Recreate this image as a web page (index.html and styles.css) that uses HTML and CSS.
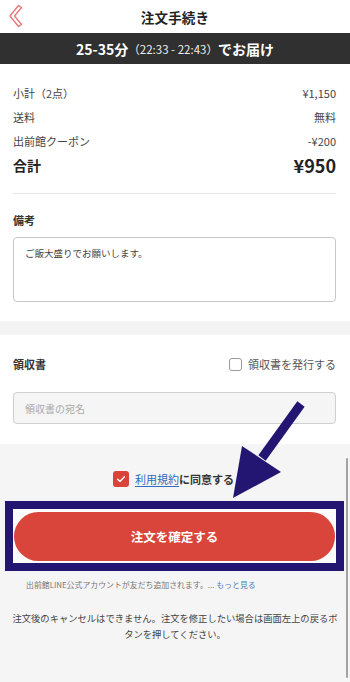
FILE: index.html
```html
<!DOCTYPE html>
<html lang="ja">
<head>
<meta charset="utf-8">
<link rel="stylesheet" href="styles.css">
</head>
<body>
<div class="page">
  <header class="header">
    <svg class="back" width="24" height="32" viewBox="0 0 24 32">
      <polygon points="16.5,5.5 8,16 16.5,26.5 19.5,24.5 12.5,16 19.5,7.5" fill="none" stroke="#e27575" stroke-width="1.3" stroke-linejoin="round"/>
    </svg>
    <h1 class="title">注文手続き</h1>
  </header>
  <div class="delivery"><b>25-35分</b><span class="range">（22:33 - 22:43）</span><b>でお届け</b></div>

  <section class="summary">
    <div class="row"><span>小計（2点）</span><span>¥1,150</span></div>
    <div class="row"><span>送料</span><span>無料</span></div>
    <div class="row"><span>出前館クーポン</span><span>-¥200</span></div>
    <div class="row total"><span>合計</span><span class="total-val">¥950</span></div>
  </section>

  <section class="notes">
    <h2 class="label">備考</h2>
    <div class="textarea">ご飯大盛りでお願いします。</div>
  </section>

  <div class="band"></div>

  <section class="receipt">
    <div class="receipt-head">
      <h2 class="label">領収書</h2>
      <label class="issue"><span class="box"></span>領収書を発行する</label>
    </div>
    <div class="input">領収書の宛名</div>
  </section>

  <section class="bottom">
    <div class="agree">
      <span class="check"><svg width="16" height="16" viewBox="0 0 16 16"><path d="M4.6 8.2 L7 10.4 L11.4 5.8" fill="none" stroke="#fff" stroke-width="1.4" stroke-linecap="round" stroke-linejoin="round"/></svg></span>
      <a class="link">利用規約</a><b>に同意する</b>
    </div>
    <div class="highlight">
      <button class="confirm">注文を確定する</button>
    </div>
    <p class="line-note">出前館LINE公式アカウントが友だち追加されます。... <span class="more">もっと見る</span></p>
    <p class="cancel">注文後のキャンセルはできません。注文を修正したい場合は画面左上の戻るボタンを押してください。</p>
  </section>

  <svg class="arrow" width="350" height="682" viewBox="0 0 350 682">
    <line x1="301" y1="404" x2="262" y2="458" stroke="#231673" stroke-width="9"/>
    <polygon points="242,446 281,472 233,498" fill="#231673"/>
  </svg>
  <div class="scrollbar"></div>
</div>
</body>
</html>
```

FILE: styles.css
```css
* { box-sizing: border-box; margin: 0; padding: 0; }
html, body { width: 350px; height: 682px; overflow: hidden; }
body {
  font-family: "Noto Sans CJK JP", "Noto Sans", sans-serif;
  color: #333;
  background: #f5f5f5;
}
.page { position: relative; width: 350px; height: 682px; background: #f5f5f5; }

.header {
  height: 33px;
  background: #fff;
  display: flex;
  align-items: center;
  justify-content: center;
  position: relative;
}
.back { position: absolute; left: 2px; top: 0; }
.title { font-size: 13.5px; font-weight: 700; color: #222; letter-spacing: 0.2px; }

.delivery {
  height: 31px;
  background: #303030;
  color: #fff;
  display: flex;
  align-items: center;
  justify-content: center;
  font-size: 14px;
}
.delivery b { font-weight: 700; }
.range { font-size: 11.5px; font-weight: 400; color: #eee; }

.summary {
  background: #fff;
  padding: 17px 14px 0 13px;
}
.row {
  display: flex;
  justify-content: space-between;
  align-items: center;
  height: 24px;
  font-size: 11px;
  color: #444;
}
.row.total { font-size: 14px; font-weight: 700; color: #222; border-bottom: 1px solid #e6e6e6; height: 41px; padding-bottom: 17px; }
.total-val { font-size: 18px; }

.notes { background: #fff; padding: 18px 14px 19px 13px; }
.label { font-size: 11px; font-weight: 700; color: #333; line-height: 16px; }
.textarea {
  margin-top: 9px;
  height: 65px;
  border: 1px solid #c8c8c8;
  border-radius: 4px;
  padding: 9px 11px;
  font-size: 9.5px;
  line-height: 12px;
  color: #444;
  background: #fff;
}

.band { height: 14px; background: #f4f4f4; }

.receipt { background: #fff; padding: 19px 14px 20px 13px; }
.receipt-head { display: flex; justify-content: space-between; align-items: center; height: 20px; }
.issue { display: flex; align-items: center; font-size: 11px; color: #555; }
.box {
  width: 13px; height: 13px;
  border: 1px solid #9a9a9a;
  border-radius: 3px;
  background: #fff;
  margin-right: 6px;
}
.input {
  margin-top: 18px;
  height: 32px;
  border: 1px solid #cfcfcf;
  border-radius: 4px;
  background: #f5f5f5;
  padding: 0 11px;
  display: flex;
  align-items: center;
  font-size: 10px;
  color: #aaa;
}

.bottom { padding-top: 26px; }
.agree {
  display: flex;
  align-items: center;
  justify-content: center;
  height: 18px;
  font-size: 11px;
  padding-right: 3px;
}
.check {
  width: 16px; height: 16px;
  border-radius: 3px;
  background: #d8433a;
  margin-right: 6px;
  display: flex;
}
.link { color: #2e6dbd; text-decoration: underline; text-underline-offset: 2px; }
.agree b { font-weight: 700; color: #333; }

.highlight {
  margin: 13px 6px 0 5px;
  border: 8px solid #231673;
  background: #fbfbfb;
  padding: 3px 1px 2px 1px;
}
.confirm {
  display: block;
  width: 100%;
  height: 49px;
  border: none;
  border-radius: 25px;
  background: #d9443b;
  color: #fff;
  font-family: inherit;
  font-size: 12.5px;
  font-weight: 700;
}

.line-note {
  margin-top: 8px;
  padding-left: 26px;
  font-size: 7.9px;
  line-height: 12px;
  color: #777;
}
.more { color: #4a7ec0; }
.cancel {
  margin-top: 19px;
  padding: 0 12px;
  text-align: center;
  font-size: 9.3px;
  line-height: 16px;
  color: #444;
}

.arrow { position: absolute; left: 0; top: 0; pointer-events: none; }
.scrollbar {
  position: absolute;
  left: 346px;
  top: 458px;
  width: 2px;
  height: 220px;
  background: #a3a3a3;
  border-radius: 1px;
}
```
